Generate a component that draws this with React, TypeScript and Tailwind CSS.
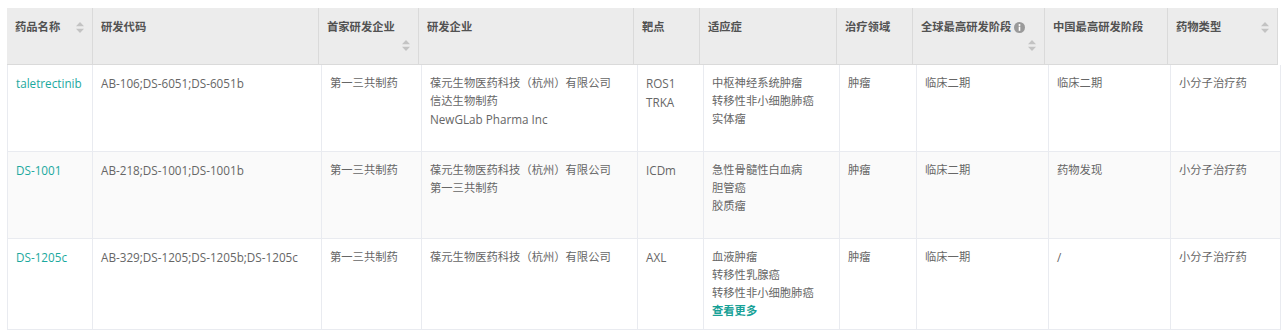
import React from "react";

const FONT = { fontFamily: '"Open Sans", "Noto Sans CJK SC", sans-serif' };

function Sorter() {
  return (
    <svg width="8" height="11" viewBox="0 0 8 11" className="block">
      <polygon points="4,0 8,4.2 0,4.2" fill="#c3c3c3" />
      <polygon points="0,6.8 8,6.8 4,11" fill="#c3c3c3" />
    </svg>
  );
}

function Info() {
  return (
    <svg width="11" height="11" viewBox="0 0 11 11" className="block">
      <circle cx="5.5" cy="5.5" r="5.5" fill="#9a9a9a" />
      <circle cx="5.5" cy="3" r="1" fill="#ffffff" />
      <rect x="4.7" y="4.6" width="1.6" height="4.2" fill="#ffffff" />
    </svg>
  );
}

type HeadCol = { t: string; sort?: "inline" | "wrap"; info?: boolean };

const headCols: HeadCol[] = [
  { t: "药品名称", sort: "inline" },
  { t: "研发代码" },
  { t: "首家研发企业", sort: "wrap" },
  { t: "研发企业" },
  { t: "靶点" },
  { t: "适应症" },
  { t: "治疗领域" },
  { t: "全球最高研发阶段", info: true, sort: "wrap" },
  { t: "中国最高研发阶段" },
  { t: "药物类型", sort: "inline" },
];

type Row = {
  name: string;
  code: string;
  first: string;
  companies: string[];
  targets: string[];
  indications: string[];
  more?: boolean;
  area: string;
  global: string;
  china: string;
  type: string;
  striped?: boolean;
};

const rows: Row[] = [
  {
    name: "taletrectinib",
    code: "AB-106;DS-6051;DS-6051b",
    first: "第一三共制药",
    companies: ["葆元生物医药科技（杭州）有限公司", "信达生物制药", "NewGLab Pharma Inc"],
    targets: ["ROS1", "TRKA"],
    indications: ["中枢神经系统肿瘤", "转移性非小细胞肺癌", "实体瘤"],
    area: "肿瘤",
    global: "临床二期",
    china: "临床二期",
    type: "小分子治疗药",
  },
  {
    name: "DS-1001",
    code: "AB-218;DS-1001;DS-1001b",
    first: "第一三共制药",
    companies: ["葆元生物医药科技（杭州）有限公司", "第一三共制药"],
    targets: ["ICDm"],
    indications: ["急性骨髓性白血病", "胆管癌", "胶质瘤"],
    area: "肿瘤",
    global: "临床二期",
    china: "药物发现",
    type: "小分子治疗药",
    striped: true,
  },
  {
    name: "DS-1205c",
    code: "AB-329;DS-1205;DS-1205b;DS-1205c",
    first: "第一三共制药",
    companies: ["葆元生物医药科技（杭州）有限公司"],
    targets: ["AXL"],
    indications: ["血液肿瘤", "转移性乳腺癌", "转移性非小细胞肺癌"],
    more: true,
    area: "肿瘤",
    global: "临床一期",
    china: "/",
    type: "小分子治疗药",
  },
];

const isLatin = (s: string) => /^[\x00-\x7f]+$/.test(s);

function Txt({ s }: { s: string }) {
  return <span className={isLatin(s) ? "text-[11.7px]" : ""}>{s}</span>;
}

function HeadCell({ c }: { c: HeadCol }) {
  return (
    <div className="border-r border-[#dadada] pl-2 pr-2 pt-[10px] pb-[10px]">
      <div className="flex h-[18px] items-center justify-between">
        <div className="flex items-center">
          <span className="whitespace-nowrap">{c.t}</span>
          {c.info && (
            <span className="ml-[3px]">
              <Info />
            </span>
          )}
        </div>
        {c.sort === "inline" && <Sorter />}
      </div>
      {c.sort === "wrap" && (
        <div className="flex h-[18px] items-center justify-end">
          <Sorter />
        </div>
      )}
    </div>
  );
}

function Cell({ children }: { children: React.ReactNode }) {
  return (
    <div className="min-h-[87px] border-r border-b border-[#e9ebf0] px-2 pt-[9px] pb-[9px]">
      {children}
    </div>
  );
}

function Lines({ items }: { items: string[] }) {
  return (
    <>
      {items.map((s, i) => (
        <div key={i} className="whitespace-nowrap">
          <Txt s={s} />
        </div>
      ))}
    </>
  );
}

export default function App() {
  return (
    <div className="min-h-[333px] w-[1285px] bg-white pt-2 text-[11.3px] leading-[18px]" style={FONT}>
      <div className="ml-[7px] grid w-fit grid-cols-[86px_226px_100px_215px_66px_137px_76px_132px_123px_110px] border-b border-[#dadada] bg-[#ececec] font-bold text-[#525252]">
        {headCols.map((c, i) => (
          <HeadCell key={i} c={c} />
        ))}
      </div>
      <div className="ml-[7px] w-fit border-l border-[#e9ebf0] text-[#666666]">
        {rows.map((r, i) => (
          <div
            key={i}
            className={
              "grid grid-cols-[85px_229px_100px_216px_66px_136px_77px_132px_122px_110px] " +
              (r.striped ? "bg-[#fafafa]" : "bg-white")
            }
          >
            <Cell>
              <span className="text-[11.7px] text-[#1ba99e]">{r.name}</span>
            </Cell>
            <Cell>
              <Txt s={r.code} />
            </Cell>
            <Cell>{r.first}</Cell>
            <Cell>
              <Lines items={r.companies} />
            </Cell>
            <Cell>
              <Lines items={r.targets} />
            </Cell>
            <Cell>
              <Lines items={r.indications} />
              {r.more && <div className="font-semibold text-[#18a197]">查看更多</div>}
            </Cell>
            <Cell>{r.area}</Cell>
            <Cell>{r.global}</Cell>
            <Cell>
              <Txt s={r.china} />
            </Cell>
            <Cell>{r.type}</Cell>
          </div>
        ))}
      </div>
    </div>
  );
}
